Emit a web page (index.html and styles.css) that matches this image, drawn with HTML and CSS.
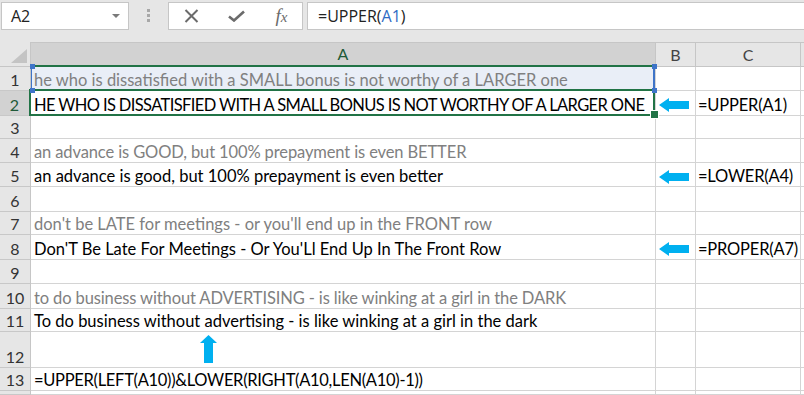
FILE: index.html
```html
<!DOCTYPE html>
<html>
<head>
<meta charset="utf-8">
<title>Sheet</title>
<link rel="stylesheet" href="styles.css">
</head>
<body>
<div class="app">
  <div class="fbar">
    <div class="namebox"><span>A2</span><span class="dd"></span></div>
    <div class="grip"><i></i><i></i><i></i></div>
    <div class="btns">
      <svg class="ic-x" width="15" height="14" viewBox="0 0 15 14"><path d="M1.5 1 L13.5 13 M13.5 1 L1.5 13" stroke="#6b6b6b" stroke-width="2" fill="none"/></svg>
      <svg class="ic-ok" width="17" height="12" viewBox="0 0 17 12"><path d="M1 6.5 L6 10.5 L16 1.5" stroke="#6b6b6b" stroke-width="2.6" fill="none"/></svg>
      <span class="fx">f<span class="fxx">x</span></span>
    </div>
    <div class="finput">=UPPER(<span class="fref">A1</span>)</div>
  </div>

  <div class="sheet">
    <div class="corner"><span class="tri"></span></div>
    <div class="ch ch-sel">A</div>
    <div class="ch">B</div>
    <div class="ch">C</div>
    <div class="ch"></div>

    <div class="rh">1</div>
    <div class="c gray refcell">he who is dissatisfied with a SMALL bonus is not worthy of a LARGER one<i class="hd tl"></i><i class="hd tr"></i><i class="hd bl"></i><i class="hd br"></i></div>
    <div class="c"></div><div class="c"></div><div class="c"></div>

    <div class="rh rh-sel">2</div>
    <div class="c active caps">HE WHO IS DISSATISFIED WITH A SMALL BONUS IS NOT WORTHY OF A LARGER ONE</div>
    <div class="c arr"><svg width="30" height="14" viewBox="0 0 30 14"><polygon points="0,7 10,0 10,3 30,3 30,11 10,11 10,14" fill="#00b0f0"/></svg></div>
    <div class="c fml">=UPPER(A1)</div><div class="c"></div>

    <div class="rh">3</div>
    <div class="c"></div><div class="c"></div><div class="c"></div><div class="c"></div>

    <div class="rh">4</div>
    <div class="c gray tight">an advance is GOOD, but 100% prepayment is even BETTER</div>
    <div class="c"></div><div class="c"></div><div class="c"></div>

    <div class="rh">5</div>
    <div class="c">an advance is good, but 100% prepayment is even better</div>
    <div class="c arr"><svg width="30" height="14" viewBox="0 0 30 14"><polygon points="0,7 10,0 10,3 30,3 30,11 10,11 10,14" fill="#00b0f0"/></svg></div>
    <div class="c fml">=LOWER(A4)</div><div class="c"></div>

    <div class="rh">6</div>
    <div class="c"></div><div class="c"></div><div class="c"></div><div class="c"></div>

    <div class="rh">7</div>
    <div class="c gray">don't be LATE for meetings - or you'll end up in the FRONT row</div>
    <div class="c"></div><div class="c"></div><div class="c"></div>

    <div class="rh">8</div>
    <div class="c">Don'T Be Late For Meetings - Or You'Ll End Up In The Front Row</div>
    <div class="c arr"><svg width="30" height="14" viewBox="0 0 30 14"><polygon points="0,7 10,0 10,3 30,3 30,11 10,11 10,14" fill="#00b0f0"/></svg></div>
    <div class="c fml">=PROPER(A7)</div><div class="c"></div>

    <div class="rh">9</div>
    <div class="c"></div><div class="c"></div><div class="c"></div><div class="c"></div>

    <div class="rh">10</div>
    <div class="c gray tight">to do business without ADVERTISING - is like winking at a girl in the DARK</div>
    <div class="c"></div><div class="c"></div><div class="c"></div>

    <div class="rh">11</div>
    <div class="c">To do business without advertising - is like winking at a girl in the dark</div>
    <div class="c"></div><div class="c"></div><div class="c"></div>

    <div class="rh">12</div>
    <div class="c upcell"><svg class="up" width="17" height="28" viewBox="0 0 17 28"><polygon points="8.5,0 17,8 13,8 13,28 4,28 4,8 0,8" fill="#00b0f0"/></svg></div>
    <div class="c"></div><div class="c"></div><div class="c"></div>

    <div class="rh">13</div>
    <div class="c fml13">=UPPER(LEFT(A10))&amp;LOWER(RIGHT(A10,LEN(A10)-1))</div>
    <div class="c"></div><div class="c"></div><div class="c"></div>

    <div class="rh"></div>
    <div class="c"></div><div class="c"></div><div class="c"></div><div class="c"></div>
  </div>
</div>
</body>
</html>
```

FILE: styles.css
```css
* { box-sizing: border-box; }
html, body { margin: 0; padding: 0; }
body {
  width: 804px;
  height: 395px;
  overflow: hidden;
  background: #ffffff;
  font-family: Lato, "Open Sans", "Liberation Sans", sans-serif;
}
.app { width: 804px; height: 395px; display: flex; flex-direction: column; }

/* formula bar */
.fbar {
  height: 42px;
  flex: none;
  background: #e6e6e6;
  display: flex;
  align-items: flex-start;
  padding-top: 2px;
}
.namebox {
  margin-left: 1px;
  width: 128px;
  height: 28px;
  background: #fff;
  border: 1px solid #c6c6c6;
  display: flex;
  align-items: center;
  justify-content: space-between;
  padding: 0 8px 0 9px;
  font-family: "Open Sans", "Noto Sans", sans-serif;
  font-size: 16px;
  color: #222;
}
.dd {
  width: 0; height: 0;
  border-left: 4px solid transparent;
  border-right: 4px solid transparent;
  border-top: 4px solid #7a7a7a;
}
.grip {
  width: 3px;
  margin: 7px 18px 0 18px;
  display: flex;
  flex-direction: column;
  gap: 2px;
}
.grip i { display: block; width: 3px; height: 3px; background: #a8a8a8; }
.btns {
  width: 135px;
  height: 28px;
  background: #fff;
  border: 1px solid #c6c6c6;
  display: grid;
  grid-template-columns: 45px 45px 45px;
  align-items: center;
  justify-items: center;
}
.fx {
  font-family: "Liberation Serif", "DejaVu Serif", serif;
  font-style: italic;
  font-size: 19px;
  color: #6b6b6b;
  line-height: 1;
  margin-top: -2px;
}
.fxx { font-size: 15px; }
.finput {
  flex: 1;
  margin-left: 4px;
  margin-right: -2px;
  height: 28px;
  background: #fff;
  border: 1px solid #c6c6c6;
  display: flex;
  align-items: center;
  padding-left: 10px;
  font-family: "Open Sans", "Noto Sans", sans-serif;
  font-size: 16px;
  color: #222;
}
.fref { color: #2e6bc4; }

/* sheet grid */
.sheet {
  flex: 1;
  display: grid;
  grid-template-columns: 31px 625px 40px 105px 1fr;
  grid-template-rows: 25px 24px 25px 23px 24px 24px 25px 23px 25px 24px 25px 23px 36px 23px 1fr;
  font-size: 16.5px;
  line-height: 20px;
  color: #000;
}
.corner {
  background: #e6e6e6;
  border-right: 1px solid #c6c6c6;
  border-bottom: 1px solid #c6c6c6;
  display: flex;
  align-items: flex-end;
  justify-content: flex-end;
  padding: 0 3px 3px 0;
}
.tri {
  width: 0; height: 0;
  border-left: 16px solid transparent;
  border-bottom: 14px solid #c4c4c4;
}
.ch {
  background: #e6e6e6;
  border-top: 1px solid #c6c6c6;
  border-right: 1px solid #c6c6c6;
  border-bottom: 1px solid #c6c6c6;
  display: flex;
  align-items: center;
  justify-content: center;
  color: #444;
  font-size: 16px;
}
.ch-sel {
  background: #d2d2d2;
  color: #1f5a38;
  border-bottom: 2px solid #217346;
}
.rh {
  background: #e6e6e6;
  border-right: 1px solid #c6c6c6;
  border-bottom: 1px solid #c8c8c8;
  display: flex;
  align-items: flex-end;
  justify-content: center;
  padding-bottom: 0;
  color: #333;
  font-size: 16px;
}
.rh-sel {
  background: #d2d2d2;
  color: #1f5a38;
  border-right: 2px solid #217346;
}
.c {
  border-right: 1px solid #d4d4d4;
  border-bottom: 1px solid #d4d4d4;
  display: flex;
  align-items: flex-end;
  padding: 0 0 0 3px;
  white-space: nowrap;
  position: relative;
}
.gray { color: #808080; }
.caps { letter-spacing: -0.62px; }
.tight { letter-spacing: -0.12px; }
.fml { letter-spacing: -0.2px; padding-left: 2px; }
.fml13 { letter-spacing: -0.3px; }

.refcell {
  background: #e9eef7;
  box-shadow: inset 1px 0 0 #3e74c8, inset -2px 0 0 #3e74c8;
}
.hd {
  position: absolute;
  width: 5px;
  height: 5px;
  background: #3e74c8;
  z-index: 3;
}
.hd.tl { left: -1px; top: -3px; }
.hd.tr { right: -2px; top: -3px; }
.hd.bl { left: -1px; bottom: -3px; }
.hd.br { right: -2px; bottom: -3px; }

.active::after {
  content: "";
  position: absolute;
  top: -2px;
  left: -2px;
  right: 0;
  bottom: -1px;
  border: 2px solid #217346;
  z-index: 2;
}
.active::before {
  content: "";
  position: absolute;
  right: -4px;
  bottom: -4px;
  width: 7px;
  height: 7px;
  background: #217346;
  border: 1px solid #fff;
  z-index: 4;
}

.arr {
  align-items: center;
  padding: 4px 0 0 3px;
}
.up {
  position: absolute;
  left: 169px;
  top: 3px;
}
```
